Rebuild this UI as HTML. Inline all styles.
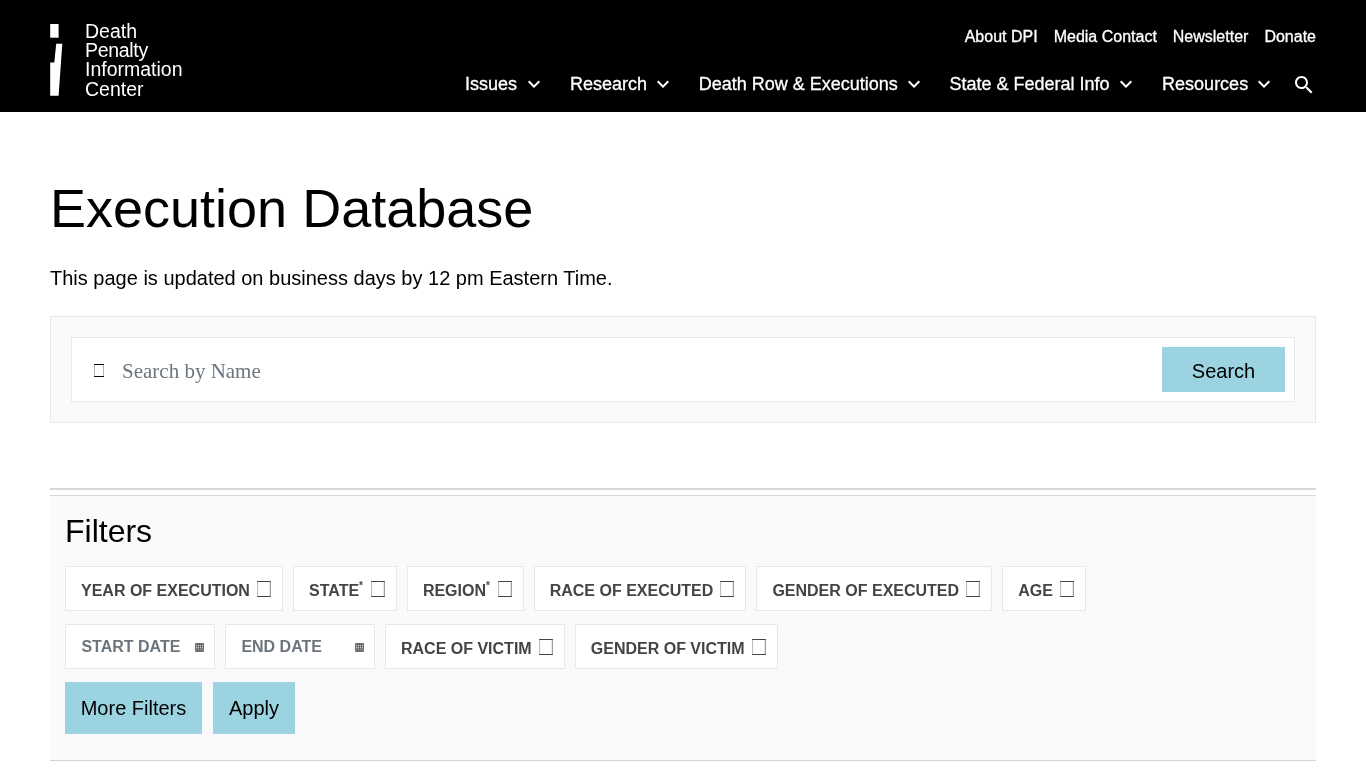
<!DOCTYPE html>
<html>
<head>
<meta charset="utf-8">
<title>Execution Database</title>
<style>
*{box-sizing:border-box;margin:0;padding:0}
html,body{width:1366px;height:768px;overflow:hidden;background:#fff}
body{font-family:"Liberation Sans",sans-serif;color:#000;position:relative}
#page{position:absolute;left:0;top:0;width:1366px;height:768px;will-change:transform}
.abs{position:absolute;white-space:nowrap}
#hdr{position:absolute;left:0;top:0;width:1366px;height:112px;background:#000}
.lg{left:85px;font-size:19.5px;line-height:20px;color:#fff}
.tn{color:#fff;font-size:16px;line-height:20px;top:27px;-webkit-text-stroke:0.3px #fff}
.mn{color:#fff;font-size:18px;line-height:22px;top:73px;-webkit-text-stroke:0.3px #fff}
.chev{position:absolute;top:72.2px;width:24px;height:24px}
h1{position:absolute;left:50px;top:176px;font-size:54px;line-height:64.8px;font-weight:400;white-space:nowrap}
#sub{left:50px;top:266px;font-size:20px;line-height:24px}
#sbox{position:absolute;left:50px;top:316px;width:1266px;height:107px;background:#fafafa;border:1px solid #e9e9e9}
#sin{position:absolute;left:71px;top:337px;width:1224px;height:65px;background:#fff;border:1px solid #e9e9e9}
#sph{left:122px;top:357.5px;font-family:"Liberation Serif",serif;font-size:21px;line-height:26px;color:#6c757d}
.btn{position:absolute;background:#9cd3e0;color:#000;font-size:20px;text-align:center;white-space:nowrap}
#fwrap{position:absolute;left:50px;top:495px;width:1266px;height:266px;background:#fafafa;border-top:1px solid #d9d9d9;border-bottom:1px solid #d4d4d4}
#fline{position:absolute;left:50px;top:488px;width:1266px;height:2px;background:#d8d8d8}
#ftitle{left:65px;top:512.2px;font-size:32px;line-height:38.4px}
.chip{position:absolute;height:45px;background:#fff;border:1px solid #e8e8e8;font-weight:700;font-size:16px;color:#444;white-space:nowrap}
.chip .t{position:absolute;left:15px;top:14px;line-height:20px}
.chip sup{font-size:10px;line-height:0;vertical-align:baseline;position:relative;top:-7.5px}
.chip svg{position:absolute;right:10px;top:13px;width:16px;height:18px}
.chip svg.cal{right:10px;top:18px;width:9px;height:9px}
.r1{top:566px}.r2{top:624px}
.chip.d{color:#6c757d}
.chip.d .t{top:12.4px;left:15.4px}
</style>
</head>
<body>
<div id="page">
<div id="hdr"></div>
<svg class="abs" style="left:50px;top:24px" width="14" height="72" viewBox="0 0 14 72"><rect x="0.2" y="0" width="8.4" height="13.7" fill="#fff"/><polygon points="6.2,19.8 12.3,19.8 8.6,71.7 0.2,71.7 0.2,38.4 4.3,38.4" fill="#fff"/></svg>
<div class="abs lg" style="top:21px">Death</div>
<div class="abs lg" style="top:40.2px;letter-spacing:-0.3px">Penalty</div>
<div class="abs lg" style="top:59.4px">Information</div>
<div class="abs lg" style="top:78.9px">Center</div>

<div class="abs tn" style="left:964.7px">About DPI</div>
<div class="abs tn" style="left:1053.7px">Media Contact</div>
<div class="abs tn" style="left:1172.8px">Newsletter</div>
<div class="abs tn" style="left:1264.4px">Donate</div>

<div class="abs mn" style="left:465px">Issues</div>
<div class="abs mn" style="left:570px">Research</div>
<div class="abs mn" style="left:698.7px">Death Row &amp; Executions</div>
<div class="abs mn" style="left:949.5px">State &amp; Federal Info</div>
<div class="abs mn" style="left:1162.1px">Resources</div>
<svg class="chev" style="left:522.3px" viewBox="0 0 24 24"><path fill="#fff" d="M16.59 8.59L12 13.17 7.41 8.59 6 10l6 6 6-6z"/></svg>
<svg class="chev" style="left:651px" viewBox="0 0 24 24"><path fill="#fff" d="M16.59 8.59L12 13.17 7.41 8.59 6 10l6 6 6-6z"/></svg>
<svg class="chev" style="left:902.1px" viewBox="0 0 24 24"><path fill="#fff" d="M16.59 8.59L12 13.17 7.41 8.59 6 10l6 6 6-6z"/></svg>
<svg class="chev" style="left:1114px" viewBox="0 0 24 24"><path fill="#fff" d="M16.59 8.59L12 13.17 7.41 8.59 6 10l6 6 6-6z"/></svg>
<svg class="chev" style="left:1252px" viewBox="0 0 24 24"><path fill="#fff" d="M16.59 8.59L12 13.17 7.41 8.59 6 10l6 6 6-6z"/></svg>
<svg class="abs" style="left:1292px;top:73.2px" width="24" height="24" viewBox="0 0 24 24"><path fill="#fff" d="M15.5 14h-.79l-.28-.27C15.41 12.59 16 11.11 16 9.5 16 5.91 13.09 3 9.5 3S3 5.91 3 9.5 5.91 16 9.5 16c1.61 0 3.09-.59 4.23-1.57l.27.28v.79l5 4.99L20.49 19l-4.99-5zm-6 0C7.01 14 5 11.99 5 9.5S7.01 5 9.5 5 14 7.01 14 9.5 11.99 14 9.5 14z"/></svg>

<h1>Execution Database</h1>
<div id="sub" class="abs">This page is updated on business days by 12 pm Eastern Time.</div>

<div id="sbox"></div>
<div id="sin"></div>
<svg class="abs" style="left:90px;top:360px" width="20" height="22" viewBox="0 0 20 22" shape-rendering="crispEdges"><rect x="4" y="5" width="1" height="11" fill="#b4b4b4"/><rect x="13" y="5" width="1" height="11" fill="#b4b4b4"/><rect x="4" y="4" width="10" height="1" fill="#0a0a0a"/><rect x="4" y="16" width="10" height="1" fill="#0a0a0a"/></svg>
<div id="sph" class="abs">Search by Name</div>
<div class="btn" style="left:1162px;top:347px;width:123px;height:45px;line-height:49px">Search</div>

<div id="fline"></div>
<div id="fwrap"></div>
<div id="ftitle" class="abs">Filters</div>

<div class="chip r1" style="left:65px;width:218px"><span class="t">YEAR OF EXECUTION</span><svg viewBox="0 0 16 18"><path d="M1.6 1V17" stroke="#b8b8b8" stroke-width="1" fill="none"/><path d="M14.3 1V17" stroke="#858585" stroke-width="1" fill="none"/><path d="M1.2 1.5H14.8M1.2 16.5H14.8" stroke="#444" stroke-width="1" fill="none"/></svg></div>
<div class="chip r1" style="left:293px;width:103.9px"><span class="t">STATE<sup>*</sup></span><svg viewBox="0 0 16 18"><path d="M1.6 1V17" stroke="#b8b8b8" stroke-width="1" fill="none"/><path d="M14.3 1V17" stroke="#858585" stroke-width="1" fill="none"/><path d="M1.2 1.5H14.8M1.2 16.5H14.8" stroke="#444" stroke-width="1" fill="none"/></svg></div>
<div class="chip r1" style="left:406.9px;width:116.9px"><span class="t">REGION<sup>*</sup></span><svg viewBox="0 0 16 18"><path d="M1.6 1V17" stroke="#b8b8b8" stroke-width="1" fill="none"/><path d="M14.3 1V17" stroke="#858585" stroke-width="1" fill="none"/><path d="M1.2 1.5H14.8M1.2 16.5H14.8" stroke="#444" stroke-width="1" fill="none"/></svg></div>
<div class="chip r1" style="left:533.7px;width:212.7px"><span class="t">RACE OF EXECUTED</span><svg viewBox="0 0 16 18"><path d="M1.6 1V17" stroke="#b8b8b8" stroke-width="1" fill="none"/><path d="M14.3 1V17" stroke="#858585" stroke-width="1" fill="none"/><path d="M1.2 1.5H14.8M1.2 16.5H14.8" stroke="#444" stroke-width="1" fill="none"/></svg></div>
<div class="chip r1" style="left:756.4px;width:235.8px"><span class="t">GENDER OF EXECUTED</span><svg viewBox="0 0 16 18"><path d="M1.6 1V17" stroke="#b8b8b8" stroke-width="1" fill="none"/><path d="M14.3 1V17" stroke="#858585" stroke-width="1" fill="none"/><path d="M1.2 1.5H14.8M1.2 16.5H14.8" stroke="#444" stroke-width="1" fill="none"/></svg></div>
<div class="chip r1" style="left:1002.2px;width:83.8px"><span class="t">AGE</span><svg viewBox="0 0 16 18"><path d="M1.6 1V17" stroke="#b8b8b8" stroke-width="1" fill="none"/><path d="M14.3 1V17" stroke="#858585" stroke-width="1" fill="none"/><path d="M1.2 1.5H14.8M1.2 16.5H14.8" stroke="#444" stroke-width="1" fill="none"/></svg></div>

<div class="chip r2 d" style="left:65px;width:150px"><span class="t">START DATE</span><svg class="cal" viewBox="0 0 9 9"><rect x="0" y="0" width="9" height="9" rx="1.2" fill="#6b6b6b"/><g fill="#fff"><g opacity=".85"><rect x="1" y="2.2" width="1" height="1"/><rect x="3" y="2.2" width="1" height="1"/><rect x="5" y="2.2" width="1" height="1"/><rect x="7" y="2.2" width="1" height="1"/><rect x="1" y="4.2" width="1" height="1"/><rect x="3" y="4.2" width="1" height="1"/><rect x="5" y="4.2" width="1" height="1"/><rect x="7" y="4.2" width="1" height="1"/></g><g opacity=".35"><rect x="1" y="6.2" width="1" height="1"/><rect x="3" y="6.2" width="1" height="1"/><rect x="5" y="6.2" width="1" height="1"/><rect x="7" y="6.2" width="1" height="1"/></g></g></svg></div>
<div class="chip r2 d" style="left:225px;width:150px"><span class="t">END DATE</span><svg class="cal" viewBox="0 0 9 9"><rect x="0" y="0" width="9" height="9" rx="1.2" fill="#6b6b6b"/><g fill="#fff"><g opacity=".85"><rect x="1" y="2.2" width="1" height="1"/><rect x="3" y="2.2" width="1" height="1"/><rect x="5" y="2.2" width="1" height="1"/><rect x="7" y="2.2" width="1" height="1"/><rect x="1" y="4.2" width="1" height="1"/><rect x="3" y="4.2" width="1" height="1"/><rect x="5" y="4.2" width="1" height="1"/><rect x="7" y="4.2" width="1" height="1"/></g><g opacity=".35"><rect x="1" y="6.2" width="1" height="1"/><rect x="3" y="6.2" width="1" height="1"/><rect x="5" y="6.2" width="1" height="1"/><rect x="7" y="6.2" width="1" height="1"/></g></g></svg></div>
<div class="chip r2" style="left:385px;width:179.8px"><span class="t">RACE OF VICTIM</span><svg viewBox="0 0 16 18"><path d="M1.6 1V17" stroke="#b8b8b8" stroke-width="1" fill="none"/><path d="M14.3 1V17" stroke="#858585" stroke-width="1" fill="none"/><path d="M1.2 1.5H14.8M1.2 16.5H14.8" stroke="#444" stroke-width="1" fill="none"/></svg></div>
<div class="chip r2" style="left:574.8px;width:202.9px"><span class="t">GENDER OF VICTIM</span><svg viewBox="0 0 16 18"><path d="M1.6 1V17" stroke="#b8b8b8" stroke-width="1" fill="none"/><path d="M14.3 1V17" stroke="#858585" stroke-width="1" fill="none"/><path d="M1.2 1.5H14.8M1.2 16.5H14.8" stroke="#444" stroke-width="1" fill="none"/></svg></div>

<div class="btn" style="left:65px;top:682px;width:137px;height:52px;line-height:52px">More Filters</div>
<div class="btn" style="left:213px;top:682px;width:82px;height:52px;line-height:52px">Apply</div>
</div>
</body>
</html>
